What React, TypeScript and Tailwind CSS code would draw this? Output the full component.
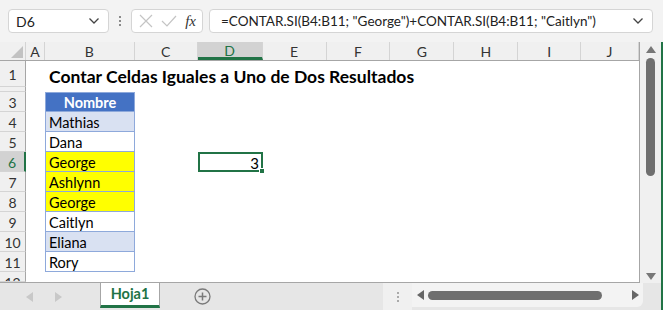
import React from "react";

const cols = [
  { k: "A", w: 19 },
  { k: "B", w: 90 },
  { k: "C", w: 63 },
  { k: "D", w: 65 },
  { k: "E", w: 64 },
  { k: "F", w: 64 },
  { k: "G", w: 64 },
  { k: "H", w: 64 },
  { k: "I", w: 63 },
  { k: "J", w: 58 },
];

const names: { n: string; bg: string }[] = [
  { n: "Mathias", bg: "bg-[#d9e1f2]" },
  { n: "Dana", bg: "bg-white" },
  { n: "George", bg: "bg-[#ffff00]" },
  { n: "Ashlynn", bg: "bg-[#ffff00]" },
  { n: "George", bg: "bg-[#ffff00]" },
  { n: "Caitlyn", bg: "bg-white" },
  { n: "Eliana", bg: "bg-[#d9e1f2]" },
  { n: "Rory", bg: "bg-white" },
];

const font = { fontFamily: "Lato, 'Liberation Sans', sans-serif" };

function Chevron() {
  return (
    <svg width="12" height="8" viewBox="0 0 12 8" className="text-[#444]">
      <path d="M1.5 1.5 L6 6 L10.5 1.5" fill="none" stroke="currentColor" strokeWidth="1.3" />
    </svg>
  );
}

function TopBar() {
  return (
    <div className="flex h-[42px] items-center bg-[#f3f3f3] pl-[8px] pr-[10px]" style={font}>
      <div className="flex h-[24px] w-[101px] items-center justify-between rounded-[4px] border border-[#d5d5d5] bg-white pl-[7px] pr-[8px] text-[14px] text-[#222]">
        <span>D6</span>
        <Chevron />
      </div>
      <div className="flex w-[22px] flex-col items-center gap-[2px]">
        <span className="h-[2px] w-[2px] bg-[#8a8a8a]" />
        <span className="h-[2px] w-[2px] bg-[#8a8a8a]" />
        <span className="h-[2px] w-[2px] bg-[#8a8a8a]" />
      </div>
      <div className="flex h-[24px] w-[72px] items-center justify-between rounded-[4px] border border-[#d5d5d5] bg-white pl-[7px] pr-[6px]">
        <svg width="14" height="14" viewBox="0 0 14 14">
          <path d="M1 1 L13 13 M13 1 L1 13" stroke="#c4c4c4" strokeWidth="1.2" />
        </svg>
        <svg width="16" height="14" viewBox="0 0 16 14">
          <path d="M1 7 L6 12 L15 2" fill="none" stroke="#c4c4c4" strokeWidth="1.2" />
        </svg>
        <span className="text-[15px] italic text-[#333]" style={{ fontFamily: "'Liberation Serif', serif" }}>
          fx
        </span>
      </div>
      <div className="ml-[6px] flex h-[24px] flex-1 items-center justify-between rounded-[4px] border border-[#d5d5d5] bg-white pl-[11px] pr-[8px] text-[13.5px] text-[#222]">
        <span>=CONTAR.SI(B4:B11; "George")+CONTAR.SI(B4:B11; "Caitlyn")</span>
        <Chevron />
      </div>
    </div>
  );
}

function Grid() {
  const rowH = [27, 5, 20, 20, 20, 20, 20, 20, 20, 20, 20, 10];
  return (
    <div className="flex w-[640px] flex-col overflow-hidden border-r border-b border-[#a6a6a6] bg-white" style={font}>
      {/* column headers */}
      <div className="flex h-[19px] border-b border-[#a6a6a6] bg-[#f0f0f0] text-[14px] text-[#333]">
        <div className="flex w-[26px] items-end justify-end border-r border-[#d4d4d4] p-[2px]">
          <svg width="12" height="12" viewBox="0 0 12 12">
            <path d="M12 0 L12 12 L0 12 Z" fill="#c2c2c2" />
          </svg>
        </div>
        {cols.map((c) =>
          c.k === "D" ? (
            <div
              key={c.k}
              style={{ width: c.w }}
              className="flex items-center justify-center border-b-[3px] border-r border-b-[#217346] border-r-[#d4d4d4] bg-[#d2d2d2] pt-[2px] text-[#217346]"
            >
              {c.k}
            </div>
          ) : (
            <div key={c.k} style={{ width: c.w }} className="flex items-center justify-center border-r border-[#d4d4d4] pt-[1px]">
              {c.k}
            </div>
          )
        )}
      </div>
      {rowH.map((h, i) => {
        const r = i + 1;
        const sel = r === 6;
        return (
          <div key={r} className="flex" style={{ height: h }}>
            <div
              className={
                "flex w-[26px] shrink-0 items-center justify-center overflow-hidden border-b border-[#d4d4d4] pt-[1px] text-[14px] " +
                (sel
                  ? "border-r-2 border-r-[#217346] bg-[#d2d2d2] text-[#217346]"
                  : "border-r border-r-[#a6a6a6] bg-[#f0f0f0] text-[#333]")
              }
            >
              <span className={r === 2 ? "mt-[14px] leading-none" : r === 12 ? "mt-[10px]" : ""}>{r}</span>
            </div>
            <div className="w-[19px] shrink-0" />
            <Bcell r={r} />
            <div className="w-[63px] shrink-0" />
            <div className="w-[65px] shrink-0">
              {sel && (
                <div className="relative flex h-full items-center justify-end border-2 border-[#217346] pt-[2px] pr-[2px] text-[15px] text-black">
                  3
                  <span className="absolute -right-[4px] -bottom-[4px] h-[6px] w-[6px] border border-white bg-[#217346]" />
                </div>
              )}
            </div>
          </div>
        );
      })}
    </div>
  );
}

function Bcell({ r }: { r: number }) {
  if (r === 1) {
    return (
      <div className="relative w-[90px] shrink-0">
        <span className="absolute left-[4px] top-[3px] whitespace-nowrap text-[17.5px] font-bold text-black">
          Contar Celdas Iguales a Uno de Dos Resultados
        </span>
      </div>
    );
  }
  if (r === 3) {
    return (
      <div className="flex w-[90px] shrink-0 items-center justify-center border border-[#8ea9db] bg-[#4472c4] pt-[2px] text-[14.5px] font-bold text-white">
        Nombre
      </div>
    );
  }
  if (r >= 4 && r <= 11) {
    const it = names[r - 4];
    return (
      <div className={"flex w-[90px] shrink-0 items-center border-x border-b border-[#8ea9db] pt-[2px] pl-[3px] text-[14.5px] text-black " + it.bg}>
        {it.n}
      </div>
    );
  }
  return <div className="w-[90px] shrink-0" />;
}

function VScroll() {
  return (
    <div className="flex w-[21px] flex-col items-center bg-[#f0f0f0] pt-[4px] pb-[3px]">
      <svg width="10" height="7" viewBox="0 0 10 7">
        <path d="M5 0 L10 7 L0 7 Z" fill="#777" />
      </svg>
      <div className="mt-[5px] h-[118px] w-[9px] rounded-full bg-[#6f6f6f]" />
      <div className="flex-1" />
      <svg width="10" height="7" viewBox="0 0 10 7">
        <path d="M0 0 L10 0 L5 7 Z" fill="#777" />
      </svg>
    </div>
  );
}

function BottomBar() {
  return (
    <div className="flex h-[27px] bg-[#e6e6e6]" style={font}>
      <div className="flex w-[100px] items-center gap-[22px] pl-[26px]">
        <svg width="7" height="10" viewBox="0 0 7 10">
          <path d="M7 0 L7 10 L0 5 Z" fill="#c8c8c8" />
        </svg>
        <svg width="7" height="10" viewBox="0 0 7 10">
          <path d="M0 0 L7 5 L0 10 Z" fill="#c8c8c8" />
        </svg>
      </div>
      <div className="flex h-[25px] w-[60px] items-center justify-center border-x border-[#a6a6a6] border-b-[3px] border-b-[#217346] bg-white text-[14.5px] font-bold text-[#217346]">
        Hoja1
      </div>
      <div className="flex w-[84px] items-center justify-center pl-[1px]">
        <svg width="17" height="17" viewBox="0 0 17 17">
          <circle cx="8.5" cy="8.5" r="7.5" fill="none" stroke="#7a7a7a" strokeWidth="1.3" />
          <path d="M8.5 4.5 V12.5 M4.5 8.5 H12.5" stroke="#7a7a7a" strokeWidth="1.5" />
        </svg>
      </div>
      <div className="w-[139px]" />
      <div className="flex w-[29px] flex-col items-center justify-center gap-[2px] bg-[#f0f0f0]">
        <span className="h-[2px] w-[2px] bg-[#aaa]" />
        <span className="h-[2px] w-[2px] bg-[#aaa]" />
        <span className="h-[2px] w-[2px] bg-[#aaa]" />
      </div>
      <div className="flex h-[24px] w-[231px] items-center rounded-br-[6px] bg-[#f3f3f3] pl-[5px] pr-[4px]">
        <svg width="7" height="10" viewBox="0 0 7 10">
          <path d="M7 0 L7 10 L0 5 Z" fill="#666" />
        </svg>
        <div className="ml-[4px] h-[9px] w-[174px] rounded-full bg-[#6f6f6f]" />
        <div className="flex-1" />
        <svg width="7" height="10" viewBox="0 0 7 10">
          <path d="M0 0 L7 5 L0 10 Z" fill="#666" />
        </svg>
      </div>
      <div className="flex-1" />
    </div>
  );
}

export default function App() {
  return (
    <div className="h-[310px] w-[663px] overflow-hidden bg-[#f3f3f3]">
      <TopBar />
      <div className="flex">
        <div className="flex w-[661px] flex-col">
          <div className="flex h-[241px]">
            <Grid />
            <VScroll />
          </div>
          <BottomBar />
        </div>
        <div className="h-[268px] w-[2px] bg-[#217346]" />
      </div>
    </div>
  );
}
